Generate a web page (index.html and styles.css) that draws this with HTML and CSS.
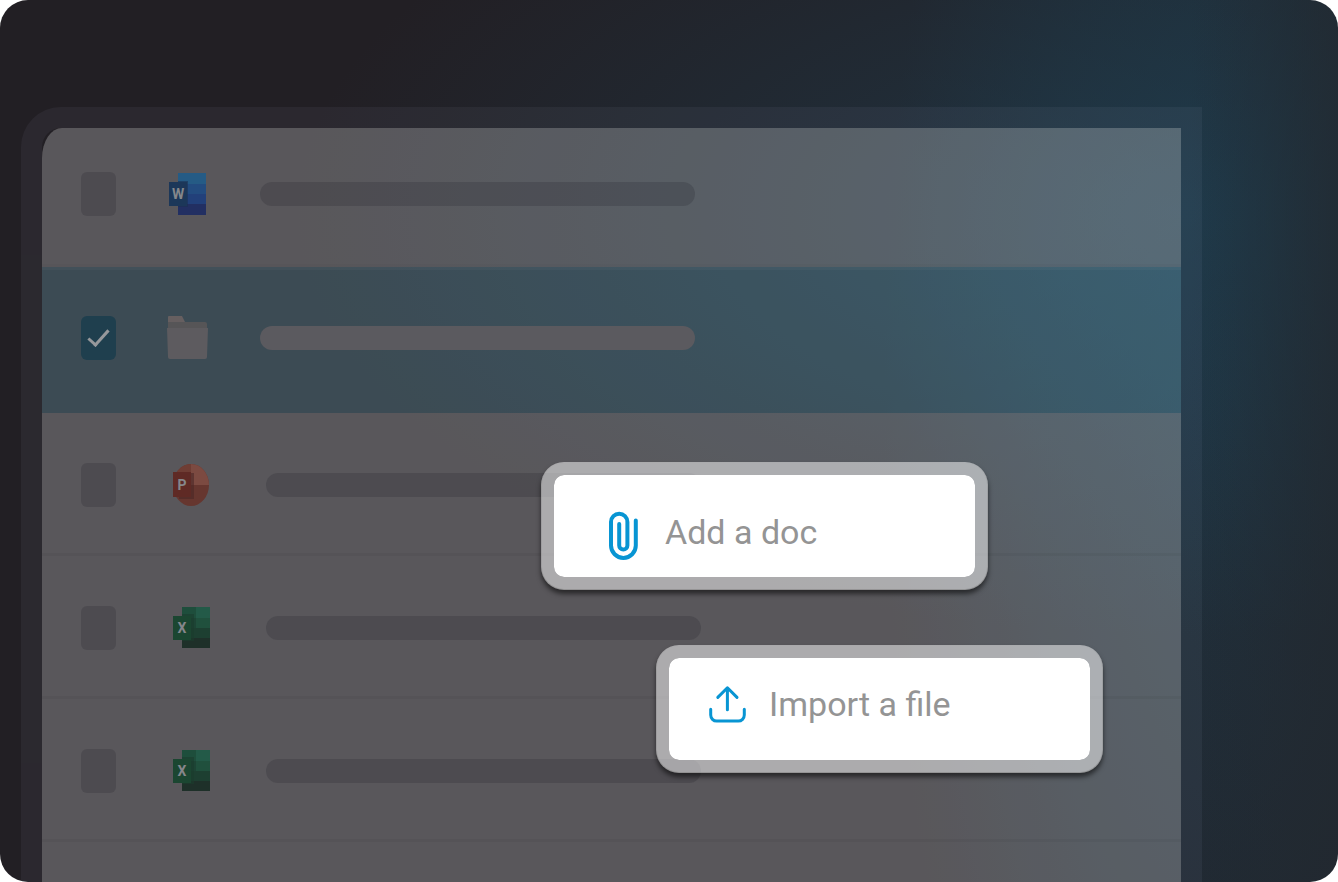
FILE: index.html
```html
<!DOCTYPE html>
<html lang="en">
<head>
<meta charset="utf-8">
<meta name="viewport" content="width=device-width, initial-scale=1">
<title>Documents</title>
<link rel="stylesheet" href="styles.css">
</head>
<body>
<main class="stage">
  <section class="frame" aria-label="Documents">
    <ul class="list">
      <li class="row row--first">
        <input class="check" type="checkbox" aria-label="Select Word document">
        <svg class="icon" viewBox="0 0 44 44" aria-hidden="true">
          <path fill="#255b85" d="M12 1h28v11H12z"/>
          <path fill="#234c80" d="M12 12h28v10H12z"/>
          <path fill="#22407a" d="M12 22h28v10H12z"/>
          <path fill="#222f62" d="M12 32h28v11H12z"/>
          <path fill="#1d3152" fill-opacity=".6" d="M12 9h10v26H12z"/>
          <path fill="#1c3759" d="M3 10h18v24H3z"/>
          <text class="letter" x="12" y="27">W</text>
        </svg>
        <span class="bar"></span>
      </li>
      <li class="row row--selected">
        <input class="check" type="checkbox" aria-label="Select folder" checked>
        <svg class="icon" viewBox="0 0 44 44" aria-hidden="true">
          <path fill="#665f60" d="M2 6V1q0-1 1-1h13l3 6z"/>
          <path fill="#565557" d="M2 6h37q2 0 2 2v8H2z"/>
          <path fill="#5d5b5f" d="M1 12h41l-1 29q0 2-2 2H4q-2 0-2-2z"/>
        </svg>
        <span class="bar"></span>
      </li>
      <li class="row row--indent">
        <input class="check" type="checkbox" aria-label="Select presentation">
        <svg class="icon" viewBox="0 0 44 44" aria-hidden="true">
          <ellipse cx="22" cy="22" rx="18" ry="21" fill="#66362f"/>
          <path fill="#7c4a41" d="M22 1a18 21 0 0 1 18 21H22z"/>
          <path fill="#6f3d34" d="M22 1a18 21 0 0 0-17 14v7h17z"/>
          <path fill="#4b2826" fill-opacity=".6" d="M8 10h17v26H10z"/>
          <path fill="#5f2a25" d="M4 9h18v25H4z"/>
          <text class="letter" x="13" y="27">P</text>
        </svg>
        <span class="bar"></span>
      </li>
      <li class="row row--indent">
        <input class="check" type="checkbox" aria-label="Select first spreadsheet">
        <svg class="icon" viewBox="0 0 44 44" aria-hidden="true">
          <path fill="#1e4e3c" d="M13 1h14v11H13z"/>
          <path fill="#235a48" d="M27 1h14v11H27z"/>
          <path fill="#1d4435" d="M13 12h14v10H13z"/>
          <path fill="#20503d" d="M27 12h14v10H27z"/>
          <path fill="#1d3f31" d="M13 22h28v10H13z"/>
          <path fill="#1e3029" d="M13 32h28v10H13z"/>
          <path fill="#1a3c2d" fill-opacity=".6" d="M13 8h12v27H13z"/>
          <path fill="#1b4631" d="M4 10h18v24H4z"/>
          <text class="letter" x="13" y="27">X</text>
        </svg>
        <span class="bar"></span>
      </li>
      <li class="row row--indent">
        <input class="check" type="checkbox" aria-label="Select second spreadsheet">
        <svg class="icon" viewBox="0 0 44 44" aria-hidden="true">
          <path fill="#1e4e3c" d="M13 1h14v11H13z"/>
          <path fill="#235a48" d="M27 1h14v11H27z"/>
          <path fill="#1d4435" d="M13 12h14v10H13z"/>
          <path fill="#20503d" d="M27 12h14v10H27z"/>
          <path fill="#1d3f31" d="M13 22h28v10H13z"/>
          <path fill="#1e3029" d="M13 32h28v10H13z"/>
          <path fill="#1a3c2d" fill-opacity=".6" d="M13 8h12v27H13z"/>
          <path fill="#1b4631" d="M4 10h18v24H4z"/>
          <text class="letter" x="13" y="27">X</text>
        </svg>
        <span class="bar"></span>
      </li>
      <li class="row row--rest" aria-hidden="true"></li>
    </ul>
  </section>

  <button class="action action--add" type="button">
    <svg class="clip" viewBox="0 0 32 50" aria-hidden="true">
      <path d="M27.8 9.5v25a12.4 12.4 0 0 1-24.8 0V11a8.2 8.2 0 0 1 16.4 0v23.5a4.1 4.1 0 0 1-8.2 0V13"/>
    </svg>
    <span>Add a doc</span>
  </button>
  <button class="action action--import" type="button">
    <svg class="upload" viewBox="0 0 40 40" aria-hidden="true">
      <path d="M19.4 3.8v22M9.8 13.4l9.6-9.6 9.6 9.6M2.7 25.3v5.8a6 6 0 0 0 6 6h21.6a6 6 0 0 0 6-6v-5.8"/>
    </svg>
    <span>Import a file</span>
  </button>
</main>
</body>
</html>
```
FILE: styles.css
```css
* {
  box-sizing: border-box;
}

body {
  margin: 0;
  background: #fff;
  font-family: Roboto, "Liberation Sans", sans-serif;
}

.stage {
  position: relative;
  display: flex;
  min-height: 100vh;
  padding: 107px 136px 0 21px;
  overflow: hidden;
  border-radius: 28px;
  background:
    linear-gradient(90deg, rgba(34, 41, 48, 0) 89%, rgba(34, 41, 48, 0.75)),
    radial-gradient(ellipse 66% 48% at 88% 24%, rgba(30, 66, 86, 0.6), rgba(30, 66, 86, 0.3) 50%, rgba(30, 66, 86, 0)),
    radial-gradient(ellipse 26% 115% at 92% 45%, rgba(30, 62, 80, 0.6), rgba(30, 62, 80, 0.3) 55%, rgba(30, 62, 80, 0)),
    #221f24;
}

.frame {
  display: flex;
  flex: 1;
  border: 21px solid rgba(210, 215, 255, 0.05);
  border-bottom: 0;
  border-top-left-radius: 40px;
}

.list {
  display: flex;
  flex: 1;
  flex-direction: column;
  margin: 0;
  padding: 0;
  overflow: hidden;
  border-top-left-radius: 20px 30px;
  list-style: none;
}

.row {
  display: flex;
  align-items: center;
  gap: 50px;
  height: 143px;
  padding: 3px 39px 0;
  border-bottom: 3px solid rgba(0, 0, 0, 0.04);
  background: rgba(255, 255, 255, 0.25);
}

.row--first {
  height: 139px;
  padding-top: 0;
  padding-bottom: 4px;
  border-bottom-color: rgba(0, 0, 0, 0.02);
}

.row--selected {
  height: 146px;
  padding-top: 0;
  padding-bottom: 8px;
  border-top: 3px solid rgba(255, 255, 255, 0.03);
  border-bottom: 0;
  background: rgba(157, 232, 254, 0.22);
}

.row--indent {
  gap: 53px;
}

.row--rest {
  flex: 1;
  height: auto;
  min-height: 40px;
  border: 0;
}

.check {
  display: grid;
  flex: none;
  place-items: center;
  width: 35px;
  height: 44px;
  margin: 0;
  appearance: none;
  border-radius: 6px;
  background: rgba(30, 28, 38, 0.2);
}

.check:checked {
  background: #1f3f4e;
}

.check:checked::before {
  width: 8px;
  height: 18px;
  margin-bottom: 4px;
  border: solid #96989b;
  border-width: 0 3px 3px 0;
  content: "";
  transform: rotate(42deg);
}

.icon {
  flex: none;
  width: 44px;
  height: 44px;
}

.letter {
  fill: #85878b;
  font-size: 14px;
  font-weight: 700;
  text-anchor: middle;
}

.bar {
  flex: none;
  width: 41%;
  height: 24px;
  border-radius: 12px;
  background: rgba(30, 28, 38, 0.2);
}

.row--selected .bar {
  background: #5b5a5f;
}

.action {
  position: absolute;
  display: flex;
  align-items: center;
  width: 447px;
  height: 128px;
  border: 13px solid rgba(255, 255, 255, 0.5);
  border-radius: 23px;
  background: #fff padding-box;
  box-shadow: 0 4px 5px rgba(0, 0, 0, 0.55);
  color: #949494;
  font: 400 34px/40px Roboto, "Liberation Sans", sans-serif;
}

.action svg {
  flex: none;
  fill: none;
  stroke: #0895d3;
  stroke-linecap: round;
  stroke-linejoin: round;
}

.action--add {
  top: 462px;
  right: 350px;
  gap: 25px;
  padding: 12px 0 0 54px;
}

.action--import {
  top: 645px;
  right: 235px;
  gap: 21px;
  padding: 0 0 11px 39px;
}

.action .clip {
  width: 32px;
  height: 50px;
  margin-top: 8px;
  stroke-width: 4;
}

.action .upload {
  width: 40px;
  height: 40px;
  stroke-width: 3;
}
```
